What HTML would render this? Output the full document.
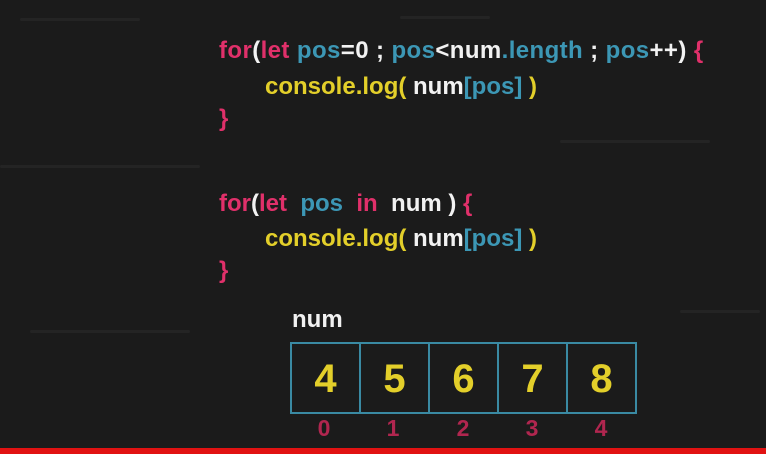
<!DOCTYPE html>
<html><head><style>
body{margin:0;width:766px;height:454px;background:#1b1b1b;overflow:hidden;position:relative;font-family:"Liberation Sans",sans-serif;font-weight:bold}
.l{position:absolute;font-size:24px;line-height:26px;white-space:pre;color:#f2f2f2}
.p{color:#e0306a}.b{color:#3c97b5}.w{color:#f2f2f2}.y{color:#e3cf2a}
.dash{position:absolute;height:3px;background:#242424;border-radius:2px}
.box{position:absolute;top:342px;left:290px;width:343px;height:68px;border:2px solid #3a8aa3;display:flex}
.box div{flex:1;border-right:2px solid #3a8aa3;color:#e3cf2a;font-size:40px;text-align:center;line-height:70px}
.box div:last-child{border-right:none}
.idx{position:absolute;top:415px;color:#b0264f;font-size:23px;width:20px;text-align:center}
</style></head><body>
<div class="dash" style="left:20px;top:18px;width:120px"></div>
<div class="dash" style="left:400px;top:16px;width:90px"></div>
<div class="dash" style="left:560px;top:140px;width:150px"></div>
<div class="dash" style="left:0;top:165px;width:200px"></div>
<div class="dash" style="left:680px;top:310px;width:80px"></div>
<div class="dash" style="left:30px;top:330px;width:160px"></div>

<div class="l" style="left:219px;top:38px;letter-spacing:0.4px"><span class="p">for</span>(<span class="p">let</span> <span class="b">pos</span>=0 ; <span class="b">pos</span>&lt;num<span class="b">.length</span> ; <span class="b">pos</span>++) <span class="p">{</span></div>
<div class="l" style="left:265px;top:74px"><span class="y">console.log(</span> num<span class="b">[pos]</span><span class="y"> )</span></div>
<div class="l p" style="left:219px;top:106px">}</div>

<div class="l" style="left:219px;top:191px"><span class="p">for</span>(<span class="p">let</span>  <span class="b">pos</span>  <span class="p">in</span>  num ) <span class="p">{</span></div>
<div class="l" style="left:265px;top:226px"><span class="y">console.log(</span> num<span class="b">[pos]</span><span class="y"> )</span></div>
<div class="l p" style="left:219px;top:258px">}</div>

<div class="l" style="left:292px;top:307px">num</div>
<div class="box"><div>4</div><div>5</div><div>6</div><div>7</div><div>8</div></div>
<div class="idx" style="left:314px">0</div>
<div class="idx" style="left:383px">1</div>
<div class="idx" style="left:453px">2</div>
<div class="idx" style="left:522px">3</div>
<div class="idx" style="left:591px">4</div>
<div style="position:absolute;left:0;top:448px;width:766px;height:6px;background:#e11212"></div>
</body></html>
